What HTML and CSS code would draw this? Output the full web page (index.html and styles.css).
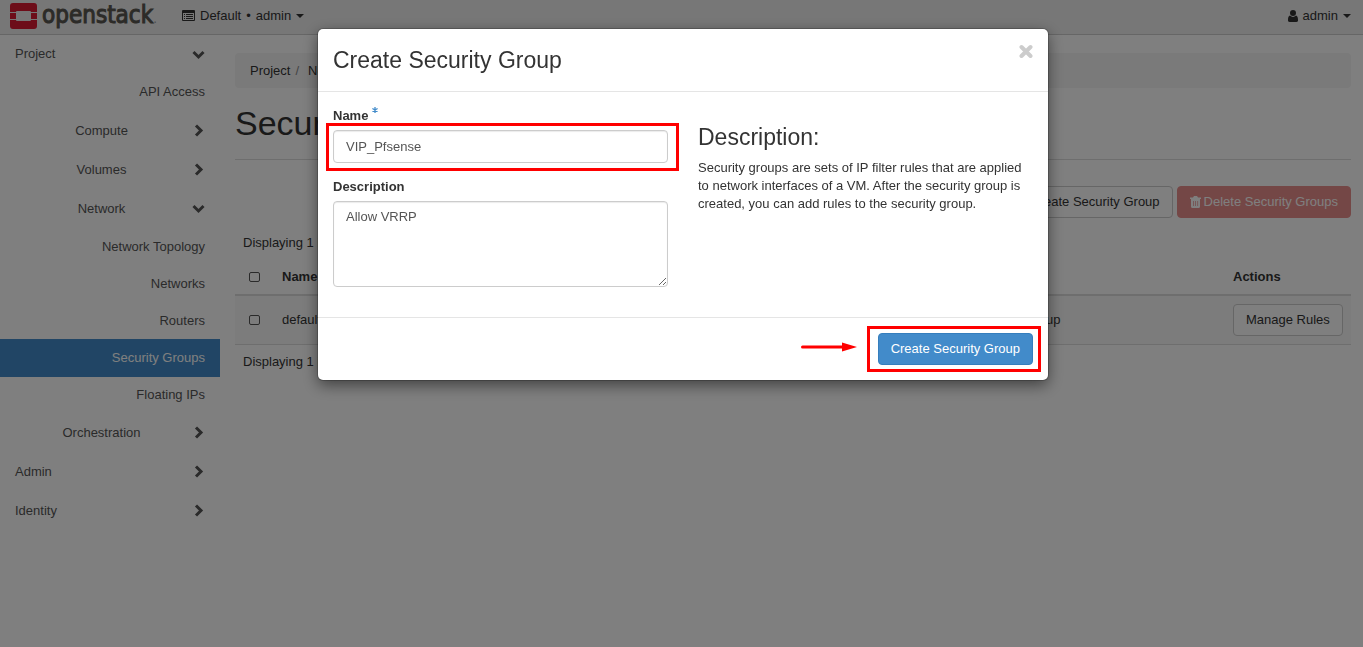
FILE: index.html
```html
<!DOCTYPE html>
<html lang="en">
<head>
<meta charset="utf-8">
<meta name="viewport" content="width=device-width, initial-scale=1">
<title>Security Groups - OpenStack Dashboard</title>
<link rel="stylesheet" href="styles.css">
</head>
<body>
<svg class="sprite" aria-hidden="true">
  <symbol id="chevron-down" viewBox="0 0 13 13"><path d="M1.500 4l5 5 5-5" fill="none" stroke="currentColor" stroke-width="3"/></symbol>
  <symbol id="chevron-right" viewBox="0 0 13 13"><path d="M4 1.500l5 5-5 5" fill="none" stroke="currentColor" stroke-width="3"/></symbol>
  <symbol id="caret" viewBox="0 0 8 4"><path d="M0 0h8L4 4z" fill="currentColor"/></symbol>
</svg>

<header class="navbar">
  <a class="brand" href="#">
    <svg class="brand-mark" viewBox="0 0 27 26" aria-hidden="true">
      <path fill="#da1a32" d="M3 0h21a3 3 0 0 1 3 3v6h-6a1 1 0 0 0-1-1H7a1 1 0 0 0-1 1H0V3a3 3 0 0 1 3-3zM0 10h6v6H0zM21 10h6v6h-6zM0 17h6a1 1 0 0 0 1 1h13a1 1 0 0 0 1-1h6v6a3 3 0 0 1-3 3H3a3 3 0 0 1-3-3z"/>
    </svg>
    <span class="brand-name">openstack<span class="brand-dot">.</span></span>
  </a>
  <a class="nav-link" href="#">
    <svg class="icon-list" viewBox="0 0 13 11" aria-hidden="true"><path fill="currentColor" fill-rule="evenodd" d="M1 0h11a1 1 0 0 1 1 1v9a1 1 0 0 1-1 1H1a1 1 0 0 1-1-1V1a1 1 0 0 1 1-1zM1 3v7h11V3zM2 4h1v1H2zM4 4h7v1H4zM2 6h1v1H2zM4 6h7v1H4zM2 8h1v1H2zM4 8h7v1H4z"/></svg>
    <span>Default</span><span>•</span><span>admin</span>
    <svg class="caret"><use href="#caret"/></svg>
  </a>
  <a class="nav-link nav-user" href="#">
    <svg class="icon-user" viewBox="0 0 10 12" aria-hidden="true"><path fill="currentColor" d="M5 0a3 3 0 0 1 0 6 3 3 0 0 1 0-6zM2 5.500a4.300 4.300 0 0 0 6 0c1.500.3 2 2 2 4.200A2 2 0 0 1 8.200 12H1.800A2 2 0 0 1 0 9.700c0-2.200.5-3.900 2-4.200z"/></svg>
    <span>admin</span>
    <svg class="caret"><use href="#caret"/></svg>
  </a>
</header>

<div class="layout">
  <nav class="sidebar">
    <a class="group top" href="#">Project<svg class="chevron"><use href="#chevron-down"/></svg></a>
    <a class="leaf top" href="#">API Access</a>
    <a class="group sub" href="#"><span>Compute</span><svg class="chevron"><use href="#chevron-right"/></svg></a>
    <a class="group sub" href="#"><span>Volumes</span><svg class="chevron"><use href="#chevron-right"/></svg></a>
    <a class="group sub" href="#"><span>Network</span><svg class="chevron"><use href="#chevron-down"/></svg></a>
    <a class="leaf" href="#">Network Topology</a>
    <a class="leaf" href="#">Networks</a>
    <a class="leaf" href="#">Routers</a>
    <a class="leaf active" href="#">Security Groups</a>
    <a class="leaf" href="#">Floating IPs</a>
    <a class="group sub" href="#"><span>Orchestration</span><svg class="chevron"><use href="#chevron-right"/></svg></a>
    <a class="group" href="#">Admin<svg class="chevron"><use href="#chevron-right"/></svg></a>
    <a class="group" href="#">Identity<svg class="chevron"><use href="#chevron-right"/></svg></a>
  </nav>

  <main class="content">
    <div class="breadcrumb"><a href="#">Project</a><span class="sep">/</span><a href="#">Network</a></div>
    <h1 class="page-title">Security Groups</h1>
    <div class="toolbar">
      <button class="btn" type="button">Create Security Group</button>
      <button class="btn btn-danger" type="button">
        <svg class="icon-trash" viewBox="0 0 11 12" aria-hidden="true"><path fill="currentColor" d="M4 0h3l1 1.500h3V3H0V1.500h3z"/><path fill="currentColor" fill-rule="evenodd" d="M1 3h9v7.500A1.500 1.500 0 0 1 8.500 12h-6A1.500 1.500 0 0 1 1 10.500zM3 5v5h.7V5zM5.200 5v5h.7V5zM7.400 5v5h.7V5z"/></svg>
        Delete Security Groups</button>
    </div>
    <p class="count">Displaying 1 item</p>
    <table class="table">
      <thead>
        <tr><th class="check"><input type="checkbox" aria-label="Select all"></th><th class="name">Name</th><th>Description</th><th class="actions">Actions</th></tr>
      </thead>
      <tbody>
        <tr><td class="check"><input type="checkbox" aria-label="Select default"></td><td>default</td><td>Default security group</td><td><button class="btn" type="button">Manage Rules</button></td></tr>
      </tbody>
    </table>
    <p class="count">Displaying 1 item</p>
  </main>
</div>

<div class="backdrop">
  <form class="modal" role="dialog" aria-labelledby="modal-title">
    <div class="modal-header">
      <h2 class="heading" id="modal-title">Create Security Group</h2>
      <button class="close" type="button" aria-label="Close">
        <svg viewBox="0 0 14 14" aria-hidden="true"><path d="M2.500 3l9 9M11.500 3l-9 9" stroke="currentColor" stroke-width="4" stroke-linecap="round"/></svg>
      </button>
    </div>
    <div class="modal-body">
      <div class="fields">
        <label class="label" for="name">Name
          <svg class="required" viewBox="0 0 6 6" aria-hidden="true"><path d="M3 0v6M.4 1.500l5.200 3M5.600 1.500l-5.200 3" stroke="currentColor" stroke-width="1.300"/></svg>
        </label>
        <div class="marked marked-field"><input class="control" id="name" type="text" value="VIP_Pfsense"></div>
        <label class="label label-next" for="description">Description</label>
        <textarea class="control area" id="description">Allow VRRP</textarea>
      </div>
      <div class="help">
        <h3 class="heading">Description:</h3>
        <p>Security groups are sets of IP filter rules that are applied to network interfaces of a VM. After the security group is created, you can add rules to the security group.</p>
      </div>
    </div>
    <div class="modal-footer">
      <svg class="arrow" viewBox="0 0 57 10" aria-hidden="true"><path d="M1.500 5H42" stroke="#f00" stroke-width="3" stroke-linecap="round"/><path fill="#f00" d="M41 .5L56 5 41 9.500z"/></svg>
      <div class="marked marked-button"><button class="btn btn-primary" type="submit">Create Security Group</button></div>
    </div>
  </form>
</div>
</body>
</html>
```
FILE: styles.css
```css
* { box-sizing: border-box; }
body {
  margin: 0;
  font: 13px/18px "Liberation Sans", Arial, sans-serif;
  color: #333;
  background: #fff;
}
a { color: inherit; text-decoration: none; }
h1, h2, h3, p { margin: 0; font-weight: 400; }
svg { display: block; flex: none; }
.sprite { position: absolute; width: 0; height: 0; }

.navbar {
  display: flex;
  align-items: center;
  height: 35px;
  padding: 0 12px 3px 10px;
  background: #eee;
  border-bottom: 1px solid #ccc;
}
.brand { display: flex; align-items: center; gap: 5px; width: 172px; color: #595650; }
.brand-mark { width: 27px; height: 26px; }
.brand-name {
  padding-top: 2px;
  font: 24px/28px "DejaVu Sans Condensed", "Open Sans", sans-serif;
  -webkit-text-stroke: 1px currentColor;
}
.brand-dot { color: #999; font-size: 13px; -webkit-text-stroke: 0; }
.nav-link { display: flex; align-items: center; gap: 5px; }
.nav-user { margin-left: auto; }
.icon-list { width: 13px; height: 11px; }
.icon-user { width: 10px; height: 12px; }
.caret { width: 8px; height: 4px; }

.layout { display: flex; }
.sidebar { width: 220px; flex: none; color: #555; }
.group, .leaf { display: flex; align-items: center; padding: 0 15px; }
.group { height: 39px; justify-content: space-between; }
.leaf { height: 37px; justify-content: flex-end; }
.top { height: 38px; }
.sub span { flex: 1; text-align: center; padding-right: 4px; }
.active { height: 38px; margin-bottom: -1px; background: #428bca; color: #fff; }
.chevron { width: 13px; height: 13px; }

.content { flex: 1; padding: 18px 12px 0 15px; }
.breadcrumb { padding: 9px 15px 8px; background: #f5f5f5; border-radius: 4px; }
.sep { padding: 0 9px 0 5px; color: #888; }
.page-title {
  padding: 17px 0;
  border-bottom: 1px solid #ddd;
  font-size: 34px;
  line-height: 37px;
}
.toolbar { display: flex; justify-content: flex-end; gap: 4px; margin-top: 26px; }
.btn {
  display: inline-flex;
  align-items: center;
  gap: 3px;
  height: 32px;
  padding: 0 12px;
  border: 1px solid #ccc;
  border-radius: 4px;
  background: #fff;
  color: #333;
  font: inherit;
}
.btn-danger { background: #e98f8d; border-color: #e98f8d; color: #fff; }
.btn-primary { background: #428bca; border-color: #357ebd; color: #fff; }
.icon-trash { width: 11px; height: 12px; }
.count { padding: 8px; }
.toolbar + .count { padding-top: 16px; }
.table { width: 100%; border-collapse: collapse; table-layout: fixed; }
.table th, .table td { padding: 8px; text-align: left; }
.table th { border-bottom: 2px solid #ddd; }
.table td { background: #f9f9f9; border-bottom: 1px solid #ddd; }
.table .check { width: 39px; padding-left: 14px; }
.name { width: 652px; }
.actions { width: 126px; }
.table input {
  display: block;
  appearance: none;
  width: 11px;
  height: 10px;
  margin: 0;
  border: 1px solid #555;
  border-radius: 2px;
}

.backdrop {
  position: fixed;
  inset: 0;
  display: flex;
  justify-content: center;
  align-items: flex-start;
  padding: 29px 0 0 3px;
  background: rgba(0, 0, 0, .5);
}
.modal {
  width: 730px;
  max-width: 100%;
  background: #fff;
  border-radius: 5px;
  box-shadow: 0 0 0 1px rgba(0, 0, 0, .2), 0 5px 15px rgba(0, 0, 0, .5);
}
.modal-header {
  display: flex;
  justify-content: space-between;
  align-items: flex-start;
  padding: 15px;
  border-bottom: 1px solid #e5e5e5;
}
.heading { font-size: 23px; line-height: 32px; }
.close { padding: 0; border: 0; background: none; color: #ccc; }
.close svg { width: 14px; height: 14px; }
.modal-body { display: grid; grid-template-columns: 1fr 1fr; gap: 30px; padding: 15px 15px 30px; }
.label { display: flex; gap: 4px; margin-bottom: 5px; font-weight: 700; }
.label-next { margin-top: 15px; }
.required { width: 6px; height: 6px; color: #428bca; }
.control {
  display: block;
  width: 100%;
  height: 33px;
  padding: 6px 12px;
  border: 1px solid #ccc;
  border-radius: 4px;
  box-shadow: inset 0 1px 1px rgba(0, 0, 0, .08);
  background: #fff;
  color: #555;
  font: inherit;
}
.area { height: 86px; resize: vertical; }
.help { padding-top: 14px; }
.help p { padding-top: 6px; }
.modal-footer {
  display: flex;
  justify-content: flex-end;
  align-items: center;
  gap: 20px;
  padding: 15px;
  border-top: 1px solid #e5e5e5;
}
.arrow { width: 57px; height: 10px; margin-bottom: 5px; }

/* Red highlight frames laid over the controls */
.marked { position: relative; }
.marked::after {
  content: "";
  position: absolute;
  border: 3px solid #f00;
  pointer-events: none;
}
.marked-field::after { inset: -7px -11px -8px -7px; }
.marked-button::after { inset: -7px -8px -7px -11px; }
```
